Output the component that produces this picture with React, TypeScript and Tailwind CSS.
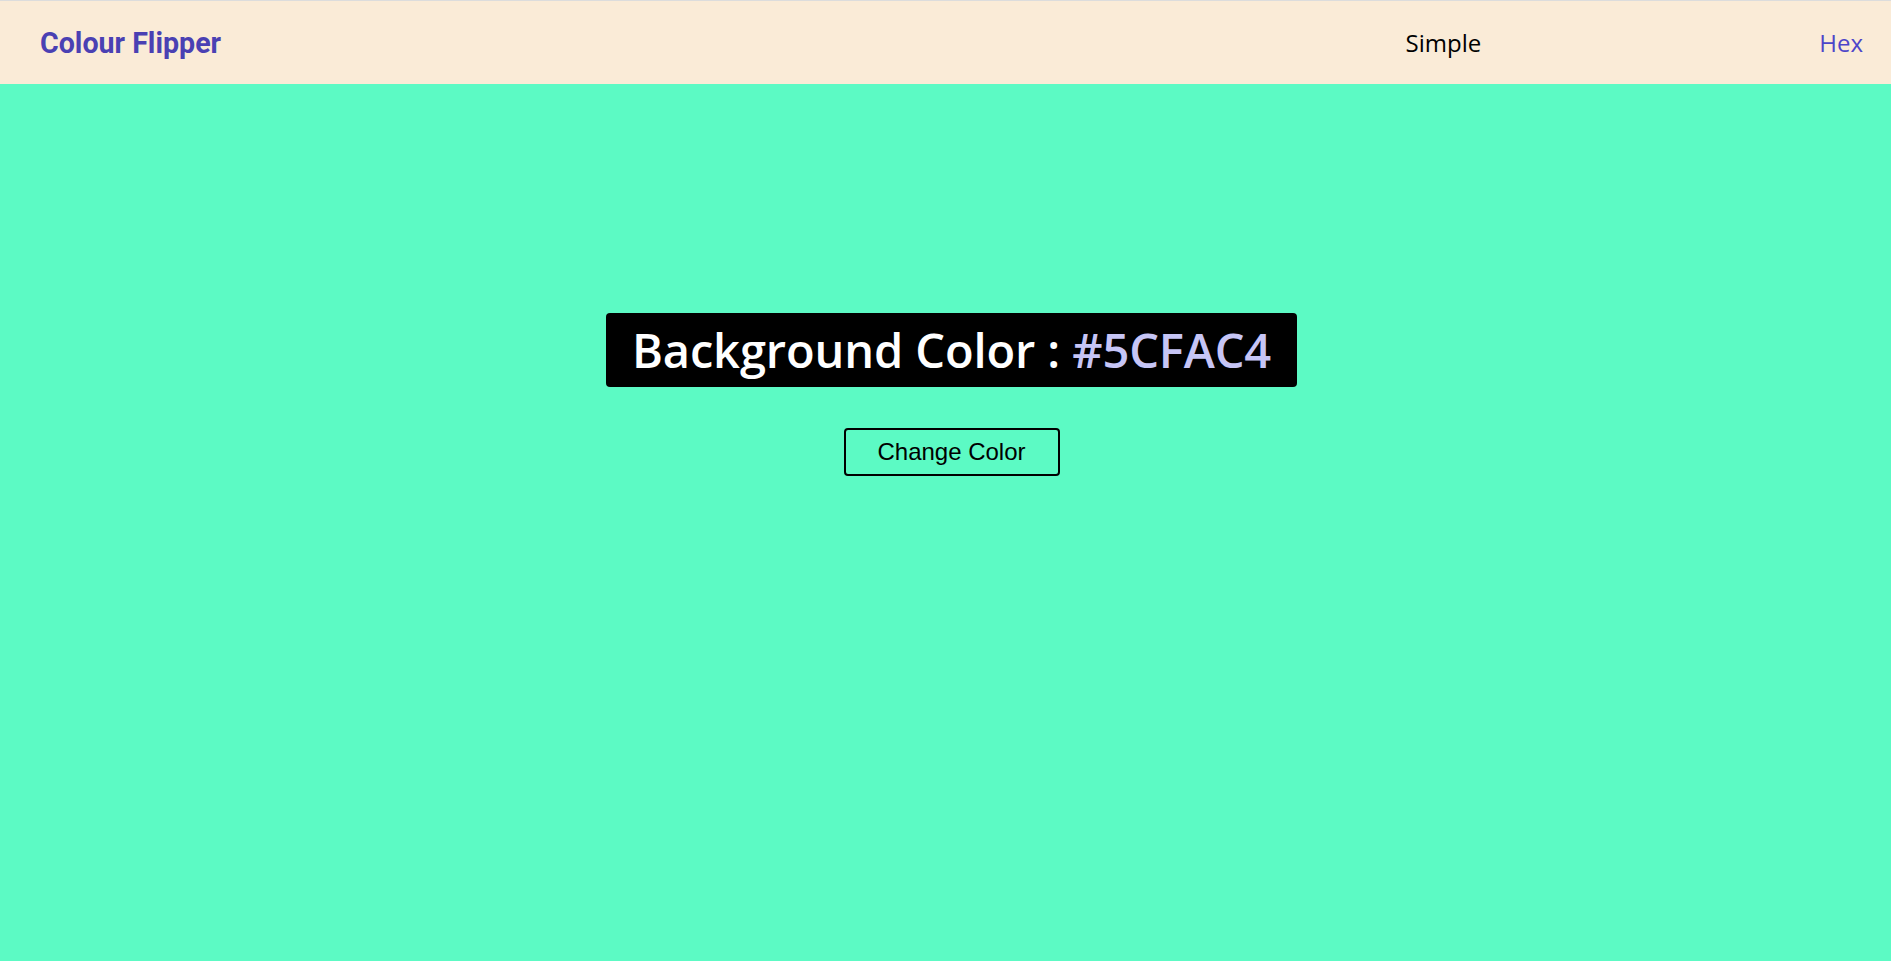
import React, { useState } from 'react';

const palette = ['#5CFAC4', '#F15025', '#FFD166', '#06D6A0', '#118AB2', '#EF476F'];

export default function App() {
  const [color, setColor] = useState('#5CFAC4');

  const handleChange = () => {
    const next = palette[Math.floor(Math.random() * palette.length)];
    setColor(next);
  };

  return (
    <div className="min-h-screen flex flex-col border-t border-[#dcdcdc]" style={{ backgroundColor: color }}>
      {/* Top nav */}
      <nav className="h-[83px] bg-[#faebd7] flex items-center justify-between pl-[40px] pr-[28px]">
        <h4 className="pt-[2px] text-[28.6px] font-bold text-[#4a40b3] font-['Roboto',sans-serif]">
          Colour Flipper
        </h4>
        <ul className="flex items-center gap-[338px] font-['Open_Sans',sans-serif] text-[24px]">
          <li className="text-black">Simple</li>
          <li className="text-[#4d45c9]">Hex</li>
        </ul>
      </nav>

      {/* Main */}
      <main className="flex-1 flex flex-col items-center pt-[229px] pl-[12px]">
        <h2 className="bg-black rounded-[4px] px-[26px] py-[10px] text-white text-[47px] leading-[54px] font-semibold font-['Open_Sans',sans-serif] tracking-[-0.12px]">
          Background Color : <span className="text-[#c6c5f6]">{color}</span>
        </h2>
        <button
          onClick={handleChange}
          className="mt-[41px] w-[216px] h-[48px] border-2 border-black rounded-[4px] text-[24px] text-black font-['Liberation_Sans',Arial,sans-serif] cursor-pointer"
        >
          Change Color
        </button>
      </main>
    </div>
  );
}
